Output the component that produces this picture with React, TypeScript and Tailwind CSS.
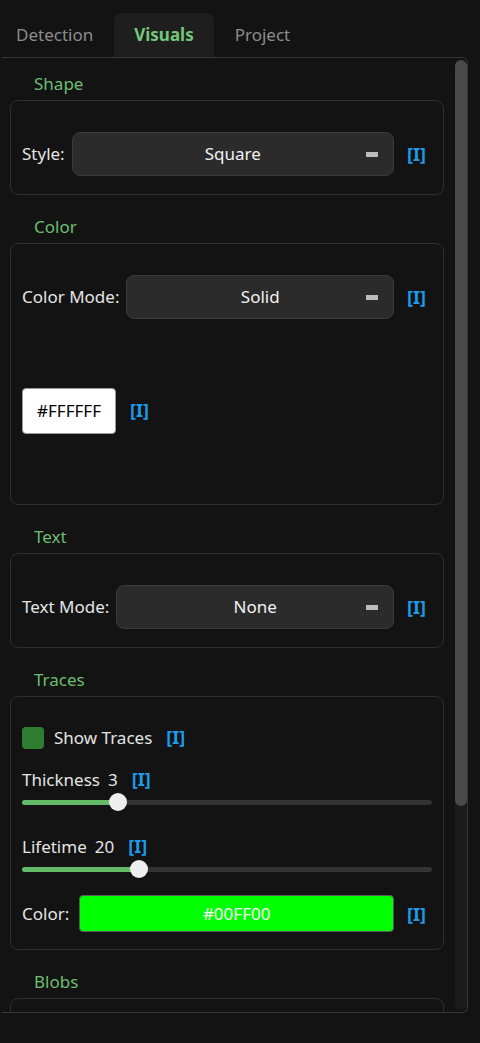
import React from 'react';

const font = { fontFamily: '"Noto Sans", "Open Sans", sans-serif' };

function Info() {
  return <span className="text-[18px] font-bold text-[#1e9be8] leading-none">[I]</span>;
}

function SectionTitle({ children, first }: { children: React.ReactNode; first?: boolean }) {
  return (
    <div className={`${first ? 'mt-[15px]' : 'mt-[21px]'} mb-[5px] pl-[24px] h-[22px] leading-[22px] text-[17px] text-[#6dbd71]`}>
      {children}
    </div>
  );
}

function Select({ label, value }: { label: string; value: string }) {
  return (
    <div className="flex items-center">
      <span className="text-[17px] text-[#e4e4e4] whitespace-nowrap">{label}</span>
      <div className="ml-[7px] flex-1 h-[44px] rounded-lg border border-[#3a3a3a] bg-[#2b2b2b] relative flex items-center justify-center">
        <span className="text-[17px] text-[#f2f2f2]">{value}</span>
        <span className="absolute right-[15px] top-[19px] w-[12px] h-[5px] bg-[#bdbdbd]" />
      </div>
      <div className="ml-[14px] w-[17px] flex justify-center">
        <Info />
      </div>
    </div>
  );
}

function Slider({ label, value, pct }: { label: string; value: string; pct: number }) {
  return (
    <div>
      <div className="flex items-center gap-[8px] h-[22px] text-[17px] text-[#e4e4e4]">
        <span>{label}</span>
        <span>{value}</span>
        <span className="ml-[6px]"><Info /></span>
      </div>
      <div className="relative mt-[2px] h-[18px] flex items-center -mr-[7px]">
        <div className="w-full h-[5px] rounded-full bg-[#333333]" />
        <div className="absolute left-0 top-[6.5px] h-[5px] rounded-full bg-[#66bb6a]" style={{ width: `${pct}%` }} />
        <div
          className="absolute top-0 w-[18px] h-[18px] -ml-[9px] rounded-full bg-[#eeeeee]"
          style={{ left: `${pct}%` }}
        />
      </div>
    </div>
  );
}

export default function App() {
  return (
    <div className="w-[480px] h-[1043px] bg-[#131313] overflow-hidden" style={font}>
      {/* Tabs */}
      <div className="flex items-end h-[57px] pl-[16px]">
        <div className="h-[44px] leading-[44px] text-[17px] text-[#8c8c8c]">Detection</div>
        <div className="ml-[21px] h-[44px] leading-[44px] px-[20px] rounded-t-lg bg-[#1e1e1e] text-[17px] font-bold text-[#74c77a]">
          Visuals
        </div>
        <div className="ml-[21px] h-[44px] leading-[44px] text-[17px] text-[#8c8c8c]">Project</div>
      </div>

      {/* Panel */}
      <div className="ml-[2px] w-[466px] h-[956px] border-t border-b border-r border-[#363636] rounded-r-md flex">
        <div className="flex-1 overflow-hidden pl-[8px] pr-[11px]">
          <SectionTitle first>Shape</SectionTitle>
          <div className="rounded-lg border border-[#2e2e2e] pl-[11px] pr-[18px] pt-[31px] pb-[18px]">
            <Select label="Style:" value="Square" />
          </div>

          <SectionTitle>Color</SectionTitle>
          <div className="rounded-lg border border-[#2e2e2e] pl-[11px] pr-[18px] pt-[31px] pb-[70px]">
            <Select label="Color Mode:" value="Solid" />
            <div className="mt-[69px] flex items-center">
              <div className="w-[94px] h-[46px] rounded-[4px] border border-[#9a9a9a] bg-white flex items-center justify-center text-[17px] text-black">
                #FFFFFF
              </div>
              <span className="ml-[14px]"><Info /></span>
            </div>
          </div>

          <SectionTitle>Text</SectionTitle>
          <div className="rounded-lg border border-[#2e2e2e] pl-[11px] pr-[18px] pt-[31px] pb-[18px]">
            <Select label="Text Mode:" value="None" />
          </div>

          <SectionTitle>Traces</SectionTitle>
          <div className="rounded-lg border border-[#2e2e2e] pl-[11px] pr-[18px] pt-[30px] pb-[17px]">
            <div className="flex items-center h-[22px]">
              <div className="w-[22px] h-[22px] rounded-[4px] bg-[#2e7d32]" />
              <span className="ml-[10px] text-[17px] text-[#e4e4e4]">Show Traces</span>
              <span className="ml-[14px]"><Info /></span>
            </div>
            <div className="mt-[20px]">
              <Slider label="Thickness" value="3" pct={23.4} />
            </div>
            <div className="mt-[25px]">
              <Slider label="Lifetime" value="20" pct={28.5} />
            </div>
            <div className="mt-[17px] flex items-center">
              <span className="text-[17px] text-[#e4e4e4]">Color:</span>
              <div className="ml-[10px] flex-1 h-[37px] rounded-[4px] border border-[#5a5a5a] bg-[#00ff00] flex items-center justify-center text-[17px] text-white">
                #00FF00
              </div>
              <div className="ml-[14px] w-[17px] flex justify-center">
                <Info />
              </div>
            </div>
          </div>

          <SectionTitle>Blobs</SectionTitle>
          <div className="rounded-lg border border-[#2e2e2e] h-[120px]" />
        </div>

        {/* Scrollbar */}
        <div className="w-[12px] py-[2px] flex flex-col">
          <div className="flex-1 rounded-full bg-[#1b1b1b] flex flex-col">
            <div className="h-[746px] rounded-full bg-[#4a4a4a]" />
          </div>
        </div>
      </div>
    </div>
  );
}
